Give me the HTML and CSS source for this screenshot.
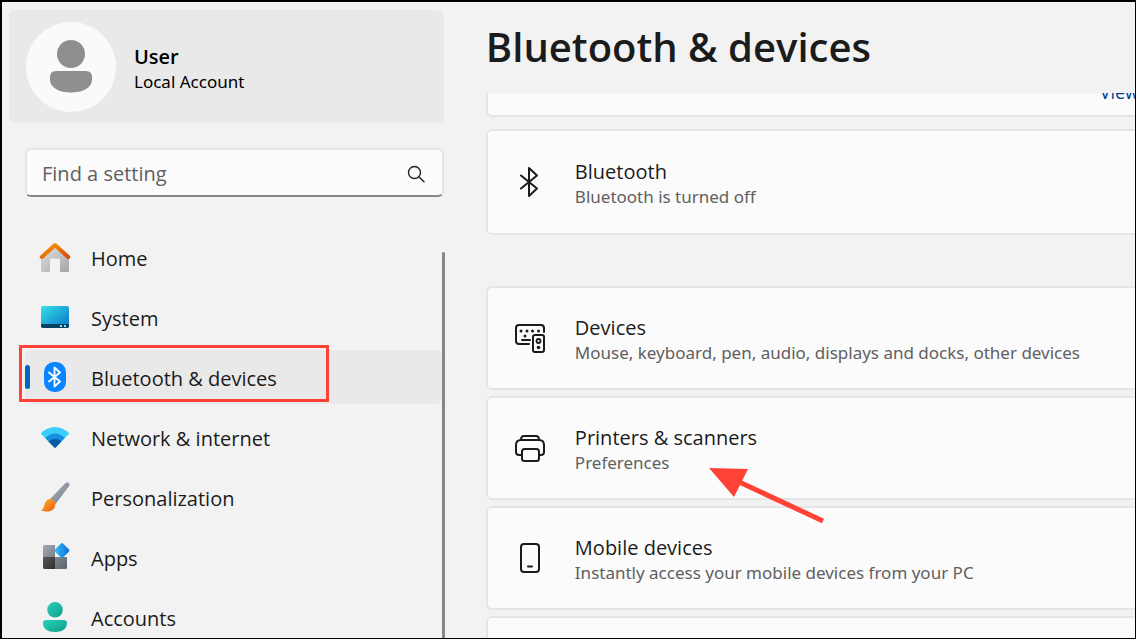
FILE: index.html
```html
<!DOCTYPE html>
<html lang="en">
<head>
    <meta charset="UTF-8">
    <meta name="viewport" content="width=device-width, initial-scale=1.0">
    <title>Settings</title>
    <link rel="stylesheet" href="styles.css">
</head>
<body>
    <div class="window">
        <aside class="sidebar">
            <button class="account" type="button">
                <svg class="avatar" width="90" height="90" viewBox="0 0 90 90" aria-hidden="true">
                    <circle cx="45" cy="45" r="45" fill="#fafafa"/>
                    <circle cx="45" cy="32" r="14" fill="#8f8f8f"/>
                    <path d="M30 49h30q6 0 6 6v3c0 8-10 12.500-21 12.500S24 66 24 58v-3q0-6 6-6z" fill="#8f8f8f"/>
                </svg>
                <span class="account-text">
                    <span class="account-name">User</span>
                    <span class="account-type">Local Account</span>
                </span>
            </button>

            <label class="search">
                <input type="text" placeholder="Find a setting" aria-label="Find a setting">
                <svg width="18" height="18" viewBox="0 0 18 18" fill="none" stroke="#222" stroke-width="1.400" stroke-linecap="round" aria-hidden="true">
                    <circle cx="7.500" cy="7.500" r="6"/>
                    <path d="M12 12l5 4.700"/>
                </svg>
            </label>

            <nav class="nav">
                <a class="nav-item" href="#">
                    <svg width="32" height="32" viewBox="0 0 32 32" aria-hidden="true">
                        <defs>
                            <linearGradient id="wall" x1="0" y1="0" x2="1" y2="1"><stop offset="0" stop-color="#e2e2e2"/><stop offset="1" stop-color="#a5a5a5"/></linearGradient>
                            <linearGradient id="roof" x1="0" y1="0" x2="1" y2="1"><stop offset="0" stop-color="#fb9a08"/><stop offset="1" stop-color="#d84a08"/></linearGradient>
                        </defs>
                        <path d="M16 4L2 16v13.500q0 1.500 1.500 1.500H11V19q0-1.500 1.500-1.500h7q1.500 0 1.500 1.500v12h7.500q1.500 0 1.500-1.500V16z" fill="url(#wall)"/>
                        <path d="M2.800 16L16 4l13.200 12" fill="none" stroke="url(#roof)" stroke-width="4" stroke-linecap="round" stroke-linejoin="round"/>
                    </svg>
                    <span>Home</span>
                </a>
                <a class="nav-item" href="#">
                    <svg width="32" height="32" viewBox="0 0 32 32" aria-hidden="true">
                        <defs><linearGradient id="screen" x1="0" y1="0" x2="1" y2="1"><stop offset="0" stop-color="#35dfe4"/><stop offset="1" stop-color="#0874c9"/></linearGradient></defs>
                        <rect x="2" y="5" width="28" height="22" rx="2" fill="url(#screen)"/>
                        <path d="M2 23h28v2q0 2-2 2H4q-2 0-2-2z" fill="#06405f"/>
                        <path d="M21 24h2v2h-2zM25 24h2v2h-2z" fill="#9fd8ef"/>
                    </svg>
                    <span>System</span>
                </a>
                <a class="nav-item active" href="#" aria-current="page">
                    <svg width="32" height="32" viewBox="0 0 32 32" aria-hidden="true">
                        <rect x="5" y="1" width="22" height="30" rx="10" fill="#0a84ff"/>
                        <path d="M10 11.500L21 20.500l-5.500 5V6.500l5.500 5L10 20.500" fill="none" stroke="#fff" stroke-width="1.800" stroke-linecap="round" stroke-linejoin="round"/>
                    </svg>
                    <span>Bluetooth &amp; devices</span>
                    <i class="highlight"></i>
                </a>
                <a class="nav-item" href="#">
                    <svg width="32" height="32" viewBox="0 0 32 32" aria-hidden="true">
                        <path d="M16 27L1.700 12.500Q8 6 16 6t14.300 6.500z" fill="#3bcdfb"/>
                        <path d="M16 27L6.300 17Q10.500 12.500 16 12.500T25.700 17z" fill="#1690e0"/>
                        <path d="M16 27L9.500 20.500Q12.500 17.700 16 17.700t6.500 2.800z" fill="#0b58a5"/>
                    </svg>
                    <span>Network &amp; internet</span>
                </a>
                <a class="nav-item" href="#">
                    <svg width="32" height="32" viewBox="0 0 32 32" aria-hidden="true">
                        <defs>
                            <linearGradient id="handle" x1="0" y1="0" x2="1" y2="1"><stop offset="0" stop-color="#b6bdc4"/><stop offset="1" stop-color="#67717c"/></linearGradient>
                            <linearGradient id="bristle" x1="0" y1="0" x2="1" y2="1"><stop offset="0" stop-color="#fdb52b"/><stop offset="1" stop-color="#ec5712"/></linearGradient>
                        </defs>
                        <path d="M11 18L26 2.500q2-1.800 3.700-.7 1.500 1.500.2 3.500L16.500 23z" fill="url(#handle)"/>
                        <path d="M11 18q4.500.5 5.500 5-.5 6-6 7.200-5 .8-8.500-1 3-1 3.200-4.500Q6 18.500 11 18z" fill="url(#bristle)"/>
                    </svg>
                    <span>Personalization</span>
                </a>
                <a class="nav-item" href="#">
                    <svg width="32" height="32" viewBox="0 0 32 32" aria-hidden="true">
                        <defs>
                            <linearGradient id="tile" x1="0" y1="0" x2="1" y2="1"><stop offset="0" stop-color="#a0a7ae"/><stop offset="1" stop-color="#7b838b"/></linearGradient>
                            <linearGradient id="tile-dark" x1="0" y1="0" x2="1" y2="1"><stop offset="0" stop-color="#55585b"/><stop offset="1" stop-color="#2d2f31"/></linearGradient>
                            <linearGradient id="tile-mid" x1="0" y1="0" x2="1" y2="1"><stop offset="0" stop-color="#81878e"/><stop offset="1" stop-color="#5c6269"/></linearGradient>
                            <linearGradient id="gem" x1="0" y1="0" x2="1" y2="0"><stop offset="0" stop-color="#3cbcf8"/><stop offset="1" stop-color="#0a70d8"/></linearGradient>
                        </defs>
                        <path d="M5.500 4H16v12H4V5.500Q4 4 5.500 4z" fill="url(#tile)"/>
                        <path d="M4 16h12v12H5.500Q4 28 4 26.500z" fill="url(#tile-dark)"/>
                        <path d="M16 16h12v10.500q0 1.500-1.500 1.500H16z" fill="url(#tile-mid)"/>
                        <path d="M21.700 2.700q1.300-1.200 2.600 0l5.500 5.500q1.200 1.300 0 2.600l-5.500 5.500q-1.300 1.200-2.600 0l-5.500-5.500q-1.200-1.300 0-2.600z" fill="url(#gem)"/>
                    </svg>
                    <span>Apps</span>
                </a>
                <a class="nav-item" href="#">
                    <svg width="32" height="32" viewBox="0 0 32 32" aria-hidden="true">
                        <defs><linearGradient id="person" x1="0" y1="0" x2="1" y2="1"><stop offset="0" stop-color="#27d2b8"/><stop offset="1" stop-color="#129c8a"/></linearGradient></defs>
                        <circle cx="16" cy="8.800" r="7.800" fill="url(#person)"/>
                        <path d="M7 19h18q3 0 3 3c0 6-5 9-12 9S4 28 4 22q0-3 3-3z" fill="url(#person)"/>
                    </svg>
                    <span>Accounts</span>
                </a>
            </nav>
        </aside>

        <main class="main">
            <h1>Bluetooth &amp; devices</h1>
            <div class="content">
                <div class="cards">
                    <div class="card card-link"><a href="#">View</a></div>
                    <section class="card card-bluetooth">
                        <svg width="32" height="32" viewBox="0 0 32 32" fill="none" stroke="#1b1b1b" stroke-width="2" stroke-linecap="round" stroke-linejoin="round" aria-hidden="true">
                            <path d="M7 9.500L23 22.500l-8 7.500V2l8 7.500L7 22.500"/>
                        </svg>
                        <div class="card-text">
                            <h2>Bluetooth</h2>
                            <p>Bluetooth is turned off</p>
                        </div>
                    </section>
                </div>

                <div class="cards">
                    <a class="card" href="#">
                        <svg width="32" height="32" viewBox="0 0 32 32" fill="none" stroke="#1b1b1b" stroke-width="2" stroke-linecap="round" aria-hidden="true">
                            <path d="M15 22H5q-3 0-3-3V6q0-3 3-3h22q3 0 3 3v4"/>
                            <path d="M8 18h8"/>
                            <rect x="19" y="13" width="11" height="17" rx="2"/>
                            <circle cx="24.500" cy="19" r="2" stroke-width="1.800"/>
                            <g fill="#1b1b1b" stroke="none">
                                <circle cx="7" cy="9" r="1.500"/>
                                <circle cx="13" cy="9" r="1.500"/>
                                <circle cx="18.500" cy="9" r="1.500"/>
                                <circle cx="24.500" cy="9" r="1.500"/>
                                <circle cx="11" cy="14" r="1.500"/>
                                <circle cx="24.500" cy="25.500" r="1.800"/>
                            </g>
                        </svg>
                        <div class="card-text">
                            <h2>Devices</h2>
                            <p>Mouse, keyboard, pen, audio, displays and docks, other devices</p>
                        </div>
                    </a>
                    <a class="card" href="#">
                        <svg width="32" height="32" viewBox="0 0 32 32" fill="none" stroke="#1b1b1b" stroke-width="2" stroke-linejoin="round" aria-hidden="true">
                            <path d="M7 8q0-4 3-4h12q3 0 3 4"/>
                            <path d="M7 23H5q-3 0-3-3v-7q0-5 5-5h18q5 0 5 5v7q0 3-3 3h-2"/>
                            <rect x="8" y="17" width="17" height="12" rx="2.500"/>
                        </svg>
                        <div class="card-text">
                            <h2>Printers &amp; scanners</h2>
                            <p>Preferences</p>
                        </div>
                        <svg class="arrow" width="116" height="58" viewBox="0 0 116 58" aria-hidden="true">
                            <path d="M0 1l39 1-14 28z" fill="#ff4236"/>
                            <path d="M28 14l86 40" stroke="#ff4236" stroke-width="5"/>
                        </svg>
                    </a>
                    <a class="card" href="#">
                        <svg width="32" height="32" viewBox="0 0 32 32" fill="none" stroke="#1b1b1b" stroke-width="2" stroke-linecap="round" aria-hidden="true">
                            <rect x="7" y="2" width="18" height="28" rx="3"/>
                            <path d="M14 24.500h4"/>
                        </svg>
                        <div class="card-text">
                            <h2>Mobile devices</h2>
                            <p>Instantly access your mobile devices from your PC</p>
                        </div>
                    </a>
                    <div class="card"></div>
                </div>
            </div>
        </main>
    </div>
</body>
</html>
```
FILE: styles.css
```css
* {
    box-sizing: border-box;
}

body {
    margin: 0;
    font-family: "Segoe UI", "Open Sans", "Noto Sans", sans-serif;
    font-size: 20px;
    color: #1b1b1b;
    background-color: #f2f2f2;
}

h1,
h2,
p {
    margin: 0;
}

a {
    color: inherit;
    text-decoration: none;
}

svg {
    flex: none;
}

.window {
    display: grid;
    grid-template-columns: 39% 1fr;
    height: 100vh;
    overflow: hidden;
    border: solid #000;
    border-width: 2px 1px 1px 2px;
}

/* Sidebar */
.sidebar {
    display: flex;
    flex-direction: column;
    min-height: 0;
    padding: 8px 0 0 7px;
}

.account {
    display: flex;
    align-items: center;
    gap: 18px;
    height: 113px;
    flex: none;
    padding: 0 17px;
    border: none;
    border-radius: 6px;
    background-color: #e9e9e9;
    color: #000;
    font-family: inherit;
    text-align: left;
}

.account-text {
    display: flex;
    flex-direction: column;
    padding-top: 4px;
}

.account-name {
    font-size: 20px;
    font-weight: 600;
    line-height: 26px;
}

.account-type {
    font-family: "Segoe UI", "Noto Sans", sans-serif;
    font-size: 17px;
    line-height: 24px;
}

.search {
    display: flex;
    align-items: center;
    flex: none;
    height: 49px;
    margin: 25px 0 0 16px;
    padding: 2px 17px 0 15px;
    border: 2px solid #e5e5e5;
    border-bottom-color: #868686;
    border-radius: 6px;
    background-color: #fbfbfb;
}

.search input {
    flex: 1;
    min-width: 0;
    padding: 0;
    border: none;
    outline: none;
    background: none;
    font-family: inherit;
    font-size: 20px;
}

.search input::placeholder {
    color: #606060;
}

.nav {
    position: relative;
    display: flex;
    flex-direction: column;
    gap: 6px;
    flex: 1;
    min-height: 0;
    margin: 33px 0 0 16px;
    padding-right: 2px;
}

/* scrollbar thumb */
.nav::after {
    content: "";
    position: absolute;
    top: 22px;
    right: -1px;
    bottom: 0;
    width: 3px;
    border-radius: 2px 2px 0 0;
    background-color: #868686;
}

.nav-item {
    position: relative;
    display: flex;
    align-items: center;
    gap: 20px;
    flex: none;
    height: 54px;
    padding-left: 14px;
    border-radius: 6px;
    line-height: 28px;
}

.nav-item span {
    padding-top: 4px;
}

.nav-item.active {
    background-color: #e9e9e9;
}

.nav-item.active::before {
    content: "";
    position: absolute;
    left: 0;
    top: 15px;
    width: 5px;
    height: 24px;
    border-radius: 3px;
    background-color: #0067c0;
}

.highlight {
    position: absolute;
    left: -6px;
    top: -5px;
    width: 310px;
    height: 57px;
    border: 3px solid #ff4236;
}

/* Main */
.main {
    display: flex;
    flex-direction: column;
    min-width: 0;
    min-height: 0;
    padding-left: 42px;
}

h1 {
    flex: none;
    padding: 17px 0 18px;
    font-size: 40px;
    font-weight: 600;
    line-height: 56px;
    white-space: nowrap;
}

.content {
    display: flex;
    flex-direction: column;
    gap: 51px;
    flex: 1;
    min-height: 0;
    overflow: hidden;
}

.cards {
    display: flex;
    flex-direction: column;
    flex: none;
    gap: 6px;
    margin-right: -20px;
}

.card {
    position: relative;
    display: flex;
    align-items: center;
    gap: 29px;
    height: 104px;
    padding: 0 26px;
    border: 2px solid #e5e5e5;
    border-radius: 6px;
    background-color: #fbfbfb;
    white-space: nowrap;
}

.card-text {
    padding-top: 3px;
}

.card h2 {
    font-size: 20px;
    font-weight: 400;
    line-height: 26px;
}

.card p {
    color: #606060;
    font-family: "Segoe UI", "Noto Sans", sans-serif;
    font-size: 17px;
    line-height: 24px;
}

.card-bluetooth {
    height: 106px;
    margin-top: 6px;
}

/* scrolled partly out of view */
.card-link {
    justify-content: flex-end;
    height: 50px;
    margin-top: -26px;
    padding: 0 14px;
    color: #003e92;
    font-size: 18px;
}

.arrow {
    position: absolute;
    z-index: 1;
    left: 221px;
    top: 69px;
}
```
